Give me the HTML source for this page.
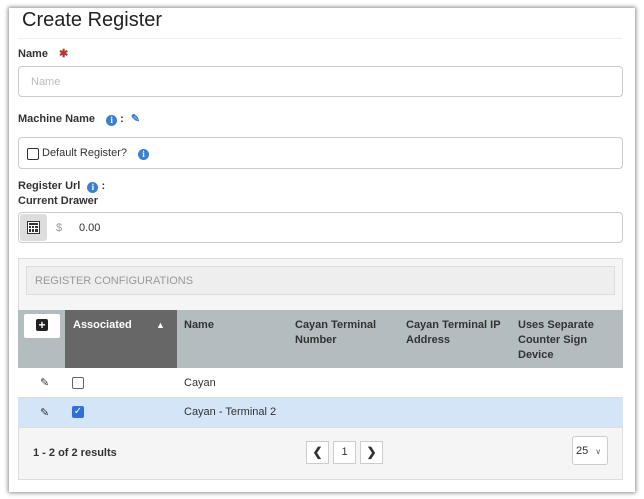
<!DOCTYPE html>
<html><head><style>
*{box-sizing:border-box;margin:0;padding:0}
body{width:644px;height:499px;background:#fff;font-family:"Liberation Sans",Arial,sans-serif;position:relative;overflow:hidden;color:#333}
.card{position:absolute;left:9px;top:8px;width:626px;height:484px;background:#fff;box-shadow:0 0 4px 1px rgba(0,0,0,.45)}
.a{position:absolute}
.lbl{font-size:11px;font-weight:bold;color:#333}
.inp{position:absolute;border:1px solid #ccc;border-radius:4px;background:#fff}
.info{display:inline-block;width:11px;height:11px;border-radius:50%;background:#3a7fd0;color:#fff;font-size:9px;font-weight:bold;text-align:center;line-height:11px;font-family:"Liberation Serif",serif;vertical-align:-1px}
.th{position:absolute;top:318px;font-size:11px;font-weight:bold;color:#333;line-height:15px}
</style></head><body>
<div class="card"></div>
<div class="a" style="left:22px;top:9px;font-size:20px;color:#222">Create Register</div>
<div class="a" style="left:18px;top:38px;width:604px;height:1px;background:#eee"></div>
<div class="a lbl" style="left:18px;top:47px">Name <span style="color:#b03a2e;margin-left:8px">✱</span></div>
<div class="inp" style="left:18px;top:66px;width:605px;height:31px"><span class="a" style="left:12px;top:9px;font-size:11px;color:#bbb">Name</span></div>
<div class="a lbl" style="left:18px;top:112px">Machine Name <span class="info" style="margin-left:8px">i</span> : <span style="color:#3a7fd0;margin-left:4px">✎</span></div>
<div class="inp" style="left:18px;top:137px;width:605px;height:32px"><span class="a" style="left:8px;top:10px;width:12px;height:12px;border:1px solid #333;border-radius:2px"></span><span class="a" style="left:23px;top:9px;font-size:11px;color:#333;white-space:nowrap">Default Register? <span class="info" style="margin-left:8px">i</span></span></div>
<div class="a lbl" style="left:18px;top:180px">Register Url <span class="info" style="margin-left:4px">i</span> :</div>
<div class="a lbl" style="left:18px;top:195px">Current Drawer</div>
<div class="inp" style="left:18px;top:212px;width:605px;height:31px;overflow:hidden">
<div class="a" style="left:1px;top:1px;width:27px;height:27px;background:#ddd;border-radius:3px">
<svg class="a" style="left:7px;top:7px" width="13" height="13" viewBox="0 0 13 13"><rect x=".5" y=".5" width="12" height="12" fill="#fff" stroke="#333"/><rect x="2" y="2" width="9" height="2" fill="#333"/><g fill="#333"><rect x="2" y="5" width="2" height="2"/><rect x="5" y="5" width="2" height="2"/><rect x="8" y="5" width="3" height="2"/><rect x="2" y="8" width="2" height="3"/><rect x="5" y="8" width="2" height="3"/><rect x="8" y="8" width="3" height="3"/></g></svg></div>
<span class="a" style="left:37px;top:9px;font-size:11px;color:#999">$</span>
<span class="a" style="left:60px;top:9px;font-size:11px;color:#333">0.00</span></div>
<div class="a" style="left:18px;top:258px;width:605px;height:222px;background:#f5f5f5;border:1px solid #ddd"></div>
<div class="a" style="left:26px;top:266px;width:589px;height:29px;border:1px solid #ddd;background:#eee;font-size:11px;color:#999;padding:8px 8px">REGISTER CONFIGURATIONS</div>
<div class="a" style="left:18px;top:310px;width:605px;height:58px;background:#b3bcbf"></div>
<div class="a" style="left:65px;top:310px;width:112px;height:58px;background:#676767"></div>
<div class="a" style="left:24px;top:314px;width:36px;height:24px;background:#fff;border-radius:2px"><div class="a" style="left:12px;top:5px;width:12px;height:12px;background:#222;border-radius:2px;color:#fff;font-size:12px;font-weight:bold;line-height:12px;text-align:center">+</div></div>
<div class="th" style="left:73px;color:#fff">Associated</div>
<div class="th" style="left:156px;color:#fff;font-size:9px">▲</div>
<div class="th" style="left:184px">Name</div>
<div class="th" style="left:295px">Cayan Terminal<br>Number</div>
<div class="th" style="left:406px">Cayan Terminal IP<br>Address</div>
<div class="th" style="left:518px">Uses Separate<br>Counter Sign<br>Device</div>
<div class="a" style="left:18px;top:368px;width:605px;height:30px;background:#fff;border-bottom:1px solid #ddd"></div>
<div class="a" style="left:18px;top:398px;width:605px;height:30px;background:#d4e5f8;border-bottom:1px solid #ddd"></div>
<div class="a" style="left:40px;top:376px;font-size:11px;color:#333">✎</div>
<div class="a" style="left:40px;top:406px;font-size:11px;color:#333">✎</div>
<div class="a" style="left:72px;top:377px;width:12px;height:12px;border:1px solid #666;border-radius:2px;background:#fff"></div>
<div class="a" style="left:72px;top:406px;width:12px;height:12px;border-radius:2px;background:#2f6fdc;color:#fff;font-size:10px;line-height:12px;text-align:center">✓</div>
<div class="a" style="left:184px;top:377px;font-size:11px">Cayan</div>
<div class="a" style="left:184px;top:406px;font-size:11px">Cayan - Terminal 2</div>
<div class="a" style="left:33px;top:447px;font-size:11px;font-weight:bold">1 - 2 of 2 results</div>
<div class="a" style="left:306px;top:441px;width:23px;height:23px;border:1px solid #ccc;background:#fff;font-size:12px;font-weight:bold;text-align:center;line-height:21px">❮</div>
<div class="a" style="left:333px;top:441px;width:23px;height:23px;border:1px solid #ccc;background:#fff;font-size:11px;text-align:center;line-height:21px">1</div>
<div class="a" style="left:360px;top:441px;width:23px;height:23px;border:1px solid #ccc;background:#fff;font-size:12px;font-weight:bold;text-align:center;line-height:21px">❯</div>
<div class="a" style="left:572px;top:436px;width:36px;height:29px;border:1px solid #ccc;border-radius:3px;background:#fff;font-size:11px;padding:8px 0 0 3px">25 <span style="font-size:8px;color:#666;margin-left:4px">∨</span></div>
</body></html>
